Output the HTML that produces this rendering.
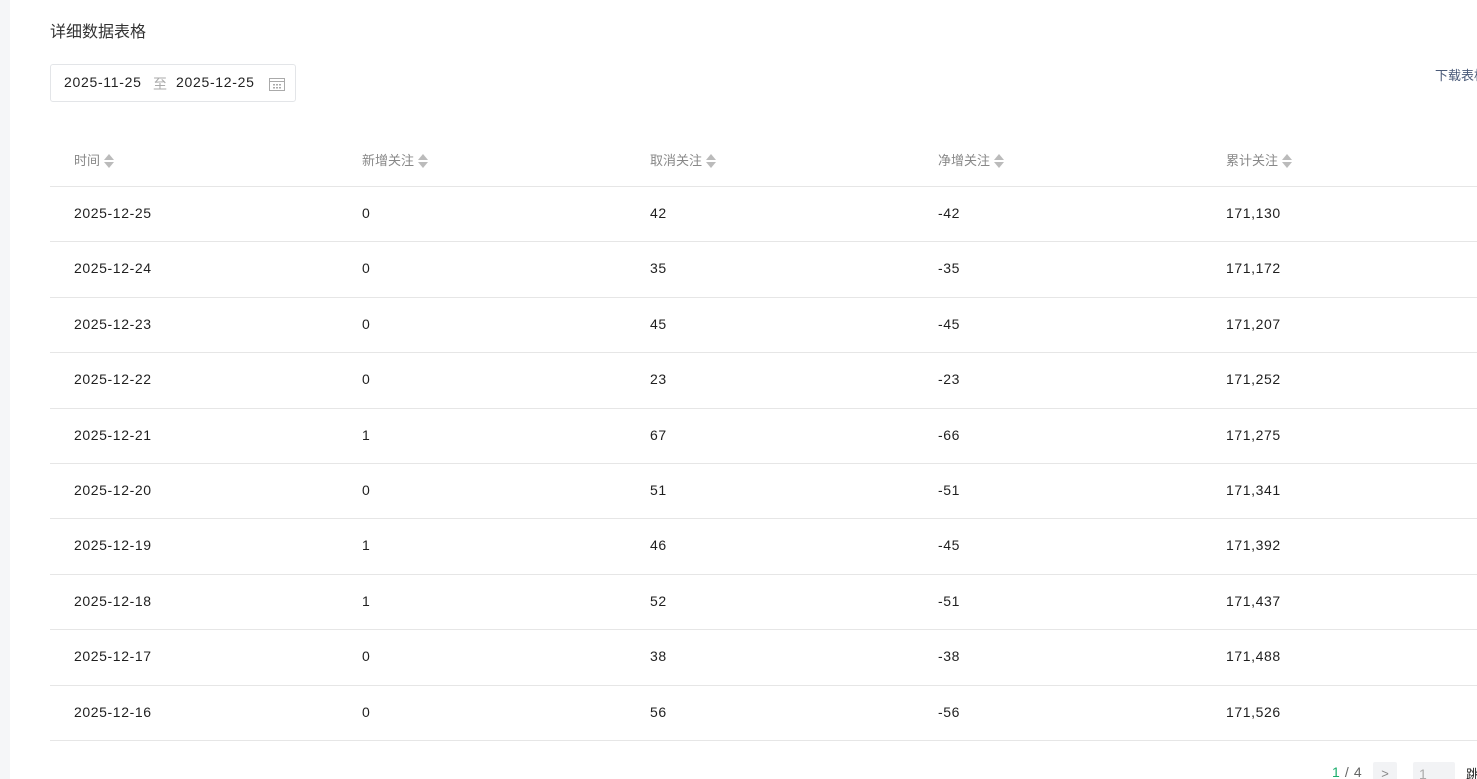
<!DOCTYPE html>
<html><head><meta charset="utf-8"><style>
*{margin:0;padding:0;box-sizing:border-box}
html,body{width:1477px;height:779px;overflow:hidden;background:#fff}
body{font-family:"Liberation Sans","Noto Sans CJK SC",sans-serif;color:#1f1f1f;position:relative}
.side{position:absolute;left:0;top:0;width:10px;height:779px;background:#f5f6f8}
.title{position:absolute;left:50px;top:18px;font-size:16px;color:#333}
.date{position:absolute;left:50px;top:64px;width:246px;height:38px;border:1px solid #e3e5e8;border-radius:3px;font-size:14px;color:#222;letter-spacing:0.7px}
.date span{position:absolute;top:9px}
.dl{position:absolute;left:1435px;top:65px;font-size:13px;color:#4a5a78;white-space:nowrap}
.line{position:absolute;left:50px;width:1427px;height:1px;background:#e6e6e6}
.c{position:absolute;font-size:14px;white-space:nowrap;letter-spacing:0.6px}
.h{color:#888;font-size:13px;letter-spacing:0}
.s{display:inline-block;vertical-align:middle;margin-left:4px;width:10px;height:14px;position:relative;top:-1px}
.s:before,.s:after{content:"";position:absolute;left:0;border-left:5px solid transparent;border-right:5px solid transparent}
.s:before{top:0;border-bottom:6px solid #bbb}
.s:after{bottom:0;border-top:6px solid #bbb}
</style></head><body>
<div class="side"></div>
<div class="title">详细数据表格</div>
<div class="date"><span style="left:13px">2025-11-25</span><span style="left:102px;color:#aaa">至</span><span style="left:125px">2025-12-25</span>
<svg style="position:absolute;left:218px;top:12px" width="16" height="14" viewBox="0 0 16 14"><rect x="0.5" y="1.5" width="15" height="12" fill="none" stroke="#aaa"/><line x1="0.5" y1="4.5" x2="15.5" y2="4.5" stroke="#aaa"/><g fill="#aaa"><rect x="4" y="7" width="2" height="1.5"/><rect x="7" y="7" width="2" height="1.5"/><rect x="10" y="7" width="2" height="1.5"/><rect x="4" y="10" width="2" height="1.5"/><rect x="7" y="10" width="2" height="1.5"/><rect x="10" y="10" width="2" height="1.5"/></g></svg></div>
<div class="dl">下载表格</div>
<div class="c h" style="left:74px;top:150px">时间<i class="s"></i></div>
<div class="c h" style="left:362px;top:150px">新增关注<i class="s"></i></div>
<div class="c h" style="left:650px;top:150px">取消关注<i class="s"></i></div>
<div class="c h" style="left:938px;top:150px">净增关注<i class="s"></i></div>
<div class="c h" style="left:1226px;top:150px">累计关注<i class="s"></i></div>
<div class="line" style="top:186px"></div>
<div id="rows"></div>
<script>
var d=[["2025-12-25",0,42,-42,"171,130"],["2025-12-24",0,35,-35,"171,172"],["2025-12-23",0,45,-45,"171,207"],["2025-12-22",0,23,-23,"171,252"],["2025-12-21",1,67,-66,"171,275"],["2025-12-20",0,51,-51,"171,341"],["2025-12-19",1,46,-45,"171,392"],["2025-12-18",1,52,-51,"171,437"],["2025-12-17",0,38,-38,"171,488"],["2025-12-16",0,56,-56,"171,526"]];
var h="",xs=[74,362,650,938,1226];
d.forEach(function(r,i){var y=186+i*55.4;r.forEach(function(v,j){h+='<div class="c" style="left:'+xs[j]+'px;top:'+Math.round(y+19)+'px">'+v+'</div>'});h+='<div class="line" style="top:'+Math.round(y+55.4)+'px"></div>'});
document.getElementById("rows").innerHTML=h;
</script>
<div class="c" style="left:1332px;top:764px;color:#666"><span style="color:#1aad6b">1</span> / 4</div>
<div style="position:absolute;left:1373px;top:762px;width:24px;height:20px;background:#f2f3f5;border-radius:2px;color:#888;font-size:13px;text-align:center;line-height:24px">&gt;</div>
<div style="position:absolute;left:1413px;top:762px;width:42px;height:20px;background:#f2f3f5;border-radius:2px;color:#aaa;font-size:14px;padding-left:6px;line-height:24px">1</div>
<div class="c" style="left:1466px;top:764px;font-size:13px">跳转</div>
</body></html>
